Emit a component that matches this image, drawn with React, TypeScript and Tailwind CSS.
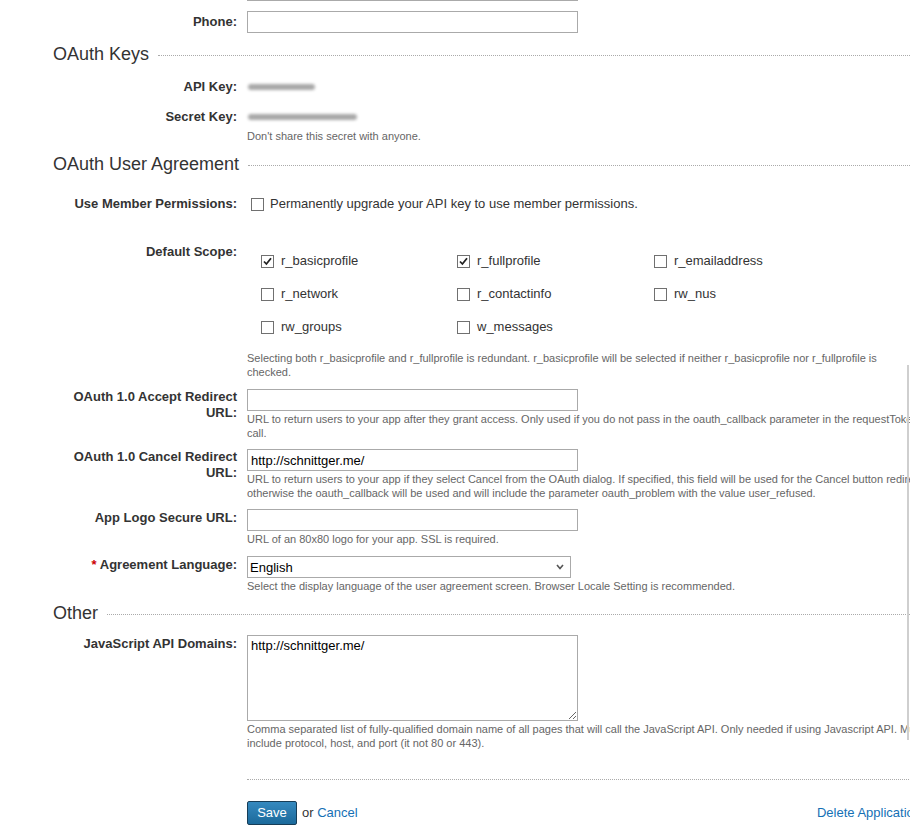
import React from 'react';

const font = { fontFamily: '"Liberation Sans", Arial, sans-serif' };

function Label({ children, className = '' }: { children: React.ReactNode; className?: string }) {
  return (
    <div className={`w-[237px] shrink-0 text-right text-[13px] leading-[16px] font-bold text-[#333] ${className}`}>
      {children}
    </div>
  );
}

function Help({ children, className = '' }: { children: React.ReactNode; className?: string }) {
  return <div className={`text-[11px] leading-[14px] text-[#666] ${className}`}>{children}</div>;
}

function TextInput({ value = '' }: { value?: string }) {
  return (
    <input
      readOnly
      value={value}
      className="block w-[331px] h-[22px] border border-[#aaa] bg-white px-[3px] text-[13px] text-black outline-none"
    />
  );
}

function Heading({ title, className = '' }: { title: string; className?: string }) {
  return (
    <div className={`flex items-center pl-[53px] ${className}`}>
      <span className="text-[18px] leading-[22px] text-[#333]">{title}</span>
      <span className="ml-[9px] flex-1 border-t border-dotted border-[#aaa] mt-[2px]" />
    </div>
  );
}

function Checkbox({ checked = false }: { checked?: boolean }) {
  return (
    <span className="inline-flex h-[13px] w-[13px] shrink-0 items-center justify-center border border-[#707070] bg-white">
      {checked && (
        <svg width="9" height="9" viewBox="0 0 9 9">
          <path d="M1 4.5 L3.4 7 L8 1.2" stroke="#222" strokeWidth="1.8" fill="none" />
        </svg>
      )}
    </span>
  );
}

const scopes: { name: string; checked?: boolean }[] = [
  { name: 'r_basicprofile', checked: true },
  { name: 'r_fullprofile', checked: true },
  { name: 'r_emailaddress' },
  { name: 'r_network' },
  { name: 'r_contactinfo' },
  { name: 'rw_nus' },
  { name: 'rw_groups' },
  { name: 'w_messages' },
];

export default function App() {
  return (
    <div className="relative w-[910px] h-[829px] overflow-hidden bg-white" style={font}>
      <div className="w-[1000px]">
        {/* tail of the previous input */}
        <div className="ml-[247px] w-[331px] h-px bg-[#aaa]" />

        <div className="flex gap-[10px] mt-[10px]">
          <Label className="pt-[3px]">Phone:</Label>
          <TextInput />
        </div>

        <Heading title="OAuth Keys" className="mt-[10px]" />

        <div className="flex gap-[10px] mt-[14px] items-center">
          <Label>API Key:</Label>
          <div className="ml-[1px] h-[6px] w-[67px] rounded-full bg-[#a8a8a8] blur-[1.5px]" />
        </div>
        <div className="flex gap-[10px] mt-[14px] items-center">
          <Label>Secret Key:</Label>
          <div className="ml-[1px] h-[6px] w-[109px] rounded-full bg-[#a8a8a8] blur-[1.5px]" />
        </div>
        <Help className="ml-[247px] mt-[4px]">Don't share this secret with anyone.</Help>

        <Heading title="OAuth User Agreement" className="mt-[10px]" />

        <div className="flex gap-[10px] mt-[21px] items-center">
          <Label>Use Member Permissions:</Label>
          <div className="flex items-center gap-[6px] pl-[4px] text-[13px] leading-[16px] text-[#333]">
            <Checkbox />
            <span>Permanently upgrade your API key to use member permissions.</span>
          </div>
        </div>

        <div className="flex gap-[10px] mt-[32px]">
          <Label>Default Scope:</Label>
          <div className="pt-[9px] pl-[14px] grid grid-cols-[196px_197px_197px] gap-y-[17px]">
            {scopes.map((s) => (
              <div key={s.name} className="flex items-center gap-[7px] text-[13px] leading-[16px] text-[#333]">
                <Checkbox checked={s.checked} />
                <span>{s.name}</span>
              </div>
            ))}
          </div>
        </div>
        <Help className="ml-[247px] w-[673px] mt-[16px]">
          Selecting both r_basicprofile and r_fullprofile is redundant. r_basicprofile will be selected if neither r_basicprofile nor r_fullprofile is checked.
        </Help>

        <div className="flex gap-[10px] mt-[10px]">
          <Label>
            OAuth 1.0 Accept Redirect
            <br />
            URL:
          </Label>
          <div className="w-[673px]">
            <TextInput />
            <Help className="mt-[1px]">
              URL to return users to your app after they grant access. Only used if you do not pass in the oauth_callback parameter in the requestToken call.
            </Help>
          </div>
        </div>

        <div className="flex gap-[10px] mt-[9px]">
          <Label>
            OAuth 1.0 Cancel Redirect
            <br />
            URL:
          </Label>
          <div className="w-[690px]">
            <TextInput value="http://schnittger.me/" />
            <Help className="mt-[1px]">
              URL to return users to your app if they select Cancel from the OAuth dialog. If specified, this field will be used for the Cancel button redirect, otherwise the oauth_callback will be used and will include the parameter oauth_problem with the value user_refused.
            </Help>
          </div>
        </div>

        <div className="flex gap-[10px] mt-[9px]">
          <Label className="pt-[1px]">App Logo Secure URL:</Label>
          <div className="w-[673px]">
            <TextInput />
            <Help className="mt-[1px]">URL of an 80x80 logo for your app. SSL is required.</Help>
          </div>
        </div>

        <div className="flex gap-[10px] mt-[10px]">
          <Label className="pt-[1px]">
            <span className="text-[#c00]">*</span> Agreement Language:
          </Label>
          <div className="w-[673px]">
            <div className="relative w-[324px] h-[22px] border border-[#aaa] bg-white">
              <span className="absolute left-[2px] top-[3px] text-[13px] leading-[16px] text-black">English</span>
              <svg className="absolute right-[6px] top-[7px]" width="8" height="6" viewBox="0 0 8 6">
                <path d="M1 1 L4 4.5 L7 1" stroke="#555" strokeWidth="1.6" fill="none" />
              </svg>
            </div>
            <Help className="mt-[1px]">
              Select the display language of the user agreement screen. Browser Locale Setting is recommended.
            </Help>
          </div>
        </div>

        <Heading title="Other" className="mt-[9px]" />

        <div className="flex gap-[10px] mt-[11px]">
          <Label className="pt-[1px]">JavaScript API Domains:</Label>
          <div className="w-[682px]">
            <textarea
              readOnly
              value="http://schnittger.me/"
              className="block w-[331px] h-[86px] border border-[#aaa] bg-white px-[3px] py-[2px] text-[13px] leading-[16px] text-black outline-none"
            />
            <Help className="mt-[1px]">
              Comma separated list of fully-qualified domain name of all pages that will call the JavaScript API. Only needed if using Javascript API. Must include protocol, host, and port (it not 80 or 443).
            </Help>
          </div>
        </div>

        <div className="ml-[247px] w-[700px] mt-[29px] border-t border-dotted border-[#aaa]" />

        <div className="ml-[247px] w-[674px] mt-[21px] flex items-center justify-between text-[13px]">
          <div className="flex items-center gap-[5px]">
            <button className="h-[24px] w-[50px] rounded-[2px] border border-[#173d57] bg-gradient-to-b from-[#3589bf] to-[#1b6a9b] text-[13px] text-white">
              Save
            </button>
            <span className="text-[#333]">
              or <span className="text-[#1570b5]">Cancel</span>
            </span>
          </div>
          <span className="text-[#1570b5]">Delete Application</span>
        </div>
      </div>

      {/* scrollbar edge */}
      <div className="absolute right-[1px] top-[365px] w-[2px] h-[375px] bg-[#cfcfcf]" />
    </div>
  );
}
